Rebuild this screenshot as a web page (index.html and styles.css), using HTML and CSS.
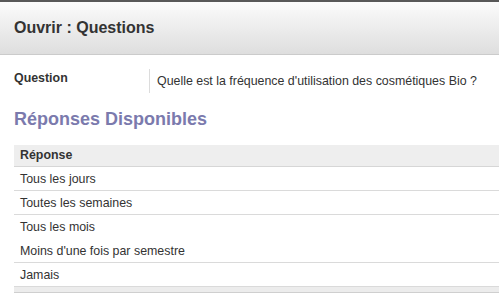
FILE: index.html
```html
<!DOCTYPE html>
<html lang="fr">
<head>
<meta charset="utf-8">
<title>Ouvrir : Questions</title>
<link rel="stylesheet" href="styles.css">
</head>
<body>
<div class="topbar"></div>
<header class="header">
  <h1 class="title">Ouvrir : Questions</h1>
</header>
<main class="content">
  <div class="field">
    <div class="field-label">Question</div>
    <div class="field-value">Quelle est la fréquence d'utilisation des cosmétiques Bio ?</div>
  </div>
  <h2 class="section-title">Réponses Disponibles</h2>
  <div class="grid">
    <div class="grid-head">Réponse</div>
    <div class="grid-row">Tous les jours</div>
    <div class="grid-row">Toutes les semaines</div>
    <div class="grid-row noline">Tous les mois</div>
    <div class="grid-row">Moins d'une fois par semestre</div>
    <div class="grid-row">Jamais</div>
    <div class="grid-foot"></div>
  </div>
</main>
</body>
</html>
```
FILE: styles.css
```css
html, body {
  margin: 0;
  padding: 0;
  background: #fff;
}
body {
  font-family: "Liberation Sans", Arial, sans-serif;
  font-size: 12.4px;
  color: #333;
}
.topbar {
  height: 2px;
  background: #585858;
}
.header {
  height: 52px;
  display: flex;
  align-items: center;
  padding-left: 14px;
  background: linear-gradient(to bottom, #fbfbfb 0%, #dedede 100%);
  border-bottom: 1px solid #cbcbcb;
}
.title {
  margin: 0;
  font-size: 16px;
  font-weight: bold;
  color: #333;
  line-height: 19px;
  margin-top: -2px;
}
.content {
  padding-left: 14px;
}
.field {
  display: flex;
  margin-top: 14px;
  height: 24px;
}
.field-label {
  width: 135px;
  font-weight: bold;
  line-height: 14px;
  padding-top: 2px;
}
.field-value {
  border-left: 1px solid #dcdcdc;
  padding-left: 7px;
  line-height: 14px;
  padding-top: 5px;
}
.section-title {
  margin: 16px 0 0 0;
  font-size: 18px;
  line-height: 21px;
  font-weight: bold;
  color: #7b7aad;
}
.grid {
  margin-top: 15px;
}
.grid-head {
  height: 21px;
  line-height: 21px;
  padding-left: 6px;
  background: #eeeeee;
  font-weight: bold;
  border-bottom: 1px solid #d6d6d6;
}
.grid-row {
  height: 23px;
  line-height: 24px;
  padding-left: 6px;
  border-bottom: 1px solid #dadada;
}
.grid-row.noline {
  border-bottom-color: transparent;
}
.grid-foot {
  height: 5px;
  background: #ececec;
  border-bottom: 1px solid #cfcfcf;
}
```
